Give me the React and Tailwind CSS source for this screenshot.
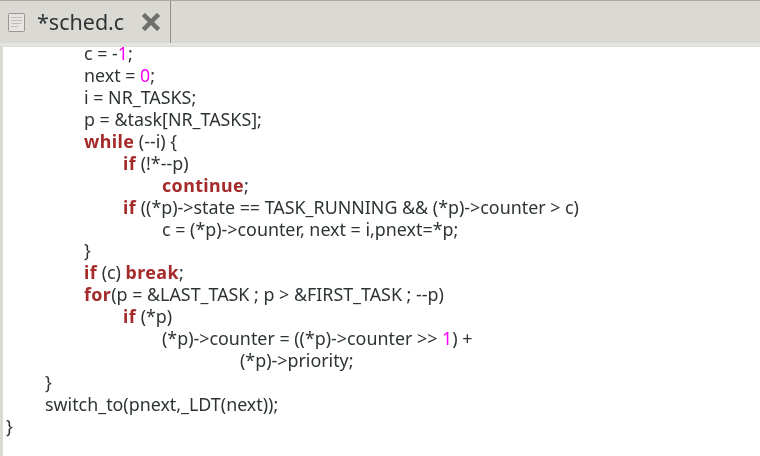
const K = ({ children }) => <span className="font-bold tracking-[0.4px] text-[#a52a2a]">{children}</span>;
const N = ({ children }) => <span className="text-[#ff00ff]">{children}</span>;

const lines = [
  ["pl-[84px]", <>c = -<N>1</N>;</>],
  ["pl-[84px]", <>next = <N>0</N>;</>],
  ["pl-[84px]", <>i = NR_TASKS;</>],
  ["pl-[84px]", <>p = &amp;task[NR_TASKS];</>],
  ["pl-[84px]", <><K>while</K> (--i) {"{"}</>],
  ["pl-[123px]", <><K>if</K> (!*--p)</>],
  ["pl-[162px]", <><K>continue</K>;</>],
  ["pl-[123px]", <><K>if</K> ((*p)-&gt;state == TASK_RUNNING &amp;&amp; (*p)-&gt;counter &gt; c)</>],
  ["pl-[162px]", <>c = (*p)-&gt;counter, next = i,pnext=*p;</>],
  ["pl-[84px]", <>{"}"}</>],
  ["pl-[84px]", <><K>if</K> (c) <K>break</K>;</>],
  ["pl-[84px]", <><K>for</K>(p = &amp;LAST_TASK ; p &gt; &amp;FIRST_TASK ; --p)</>],
  ["pl-[123px]", <><K>if</K> (*p)</>],
  ["pl-[162px]", <>(*p)-&gt;counter = ((*p)-&gt;counter &gt;&gt; <N>1</N>) +</>],
  ["pl-[240px]", <>(*p)-&gt;priority;</>],
  ["pl-[45px]", <>{"}"}</>],
  ["pl-[45px]", <>switch_to(pnext,_LDT(next));</>],
  ["pl-[6px]", <>{"}"}</>],
];

export default function App() {
  return (
    <div className="w-[760px] h-[456px] overflow-hidden flex flex-col bg-white font-['Noto_Sans',sans-serif] text-[#2e3436]">
      <div className="h-[43px] shrink-0 flex bg-[#dad9d4] border-t border-[#a9a8a3]">
        <div className="w-[171px] flex items-center border-r border-[#8f8e89]">
          <svg className="ml-[8px] w-[17px] h-[19px] blur-[0.4px]" viewBox="0 0 17 19">
            <rect x="0.5" y="0.5" width="16" height="18" rx="1" fill="#e6e5e1" stroke="#96958f" />
            <path d="M3 4.5h11M3 7.5h11M3 10.5h11M3 13.5h7" stroke="#c0bfba" />
          </svg>
          <span className="ml-[12px] text-[21.5px] leading-none text-[#2e3436] blur-[0.4px]">*sched.c</span>
          <svg className="ml-[18px] w-[18px] h-[18px] blur-[0.4px]" viewBox="0 0 18 18">
            <path d="M3 3L15 15M15 3L3 15" stroke="#6f6f6b" strokeWidth="4.5" strokeLinecap="square" />
          </svg>
        </div>
      </div>
      <div className="h-[4px] shrink-0 bg-[#e4e3de] border-b border-[#dad9d4]" />
      <div className="flex-1 flex">
        <div className="w-[3px] bg-[#dad9d4]" />
        <div className="flex-1 text-[17.85px] leading-[21.94px] whitespace-pre -mt-[4px] blur-[0.4px]">
          {lines.map(([cls, content], i) => (
            <div key={i} className={cls + " h-[21.94px] -ml-[3px]"}>{content}</div>
          ))}
        </div>
      </div>
    </div>
  );
}
